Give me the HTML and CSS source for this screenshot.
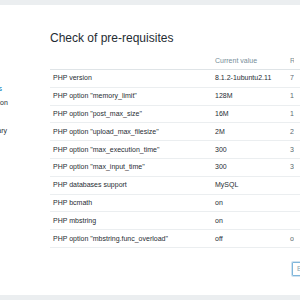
FILE: index.html
```html
<!doctype html>
<html lang="en">
    <head>
        <meta charset="UTF-8">
        <title>Zabbix setup - Check of pre-requisites</title>
        <link rel="stylesheet" href="styles.css">
    </head>
    <body>
        <div class="top-strip"></div>
        <div class="setup">
            <div class="setup-left">
                <ul class="steps">
                    <li>Welcome</li>
                    <li class="current">Check of pre-requisites</li>
                    <li>Configure DB connection</li>
                    <li>Settings</li>
                    <li>Pre-installation summary</li>
                    <li>Install</li>
                </ul>
            </div>
            <div class="setup-right">
                <h1>Check of pre-requisites</h1>
                <table class="checks">
                    <thead>
                        <tr>
                            <th class="col-name"></th>
                            <th class="col-current">Current value</th>
                            <th class="col-required">Required</th>
                            <th></th>
                        </tr>
                    </thead>
                    <tbody>
                        <tr><td>PHP version</td><td>8.1.2-1ubuntu2.11</td><td>7.4.0</td><td></td></tr>
                        <tr><td>PHP option "memory_limit"</td><td>128M</td><td>128M</td><td></td></tr>
                        <tr><td>PHP option "post_max_size"</td><td>16M</td><td>16M</td><td></td></tr>
                        <tr><td>PHP option "upload_max_filesize"</td><td>2M</td><td>2M</td><td></td></tr>
                        <tr><td>PHP option "max_execution_time"</td><td>300</td><td>300</td><td></td></tr>
                        <tr><td>PHP option "max_input_time"</td><td>300</td><td>300</td><td></td></tr>
                        <tr><td>PHP databases support</td><td>MySQL</td><td></td><td></td></tr>
                        <tr><td>PHP bcmath</td><td>on</td><td></td><td></td></tr>
                        <tr><td>PHP mbstring</td><td>on</td><td></td><td></td></tr>
                        <tr><td>PHP option "mbstring.func_overload"</td><td>off</td><td>off</td><td></td></tr>
                    </tbody>
                </table>
                <div class="actions">
                    <button class="btn-alt">Back</button>
                    <button class="btn">Next step</button>
                </div>
            </div>
        </div>
        <div class="bottom-strip"></div>
    </body>
</html>
```

FILE: styles.css
```css
* {
    box-sizing: border-box;
}
html, body {
    margin: 0;
    height: 300px;
    overflow: hidden;
}
body {
    display: flex;
    flex-direction: column;
    font-family: "Liberation Sans", Arial, sans-serif;
    color: #1f2c33;
    background-color: #fff;
}
.top-strip, .bottom-strip {
    height: 5px;
    flex: none;
    background-color: #ebeef0;
}
.setup {
    flex: 1;
    display: flex;
    min-height: 0;
}
.setup-left {
    width: 50px;
    flex: none;
}
.steps {
    list-style: none;
    margin: 63px 0 0 -70px;
    padding: 0;
    font-size: 7px;
    line-height: 14px;
    white-space: nowrap;
}
.steps .current {
    color: #0275b8;
}
.setup-right {
    flex: none;
    width: 340px;
}
h1 {
    margin: 26px 0 0;
    font-size: 12px;
    line-height: 14px;
    font-weight: normal;
}
.checks {
    width: 330px;
    margin-top: 12px;
    border-collapse: collapse;
    table-layout: fixed;
    font-size: 7px;
    line-height: 8px;
    text-align: left;
}
.checks th {
    padding: 0 3px 4px;
    font-weight: normal;
    color: #768d99;
    border-bottom: 1px solid #dfe4e7;
    overflow: hidden;
    white-space: nowrap;
}
.checks td {
    height: 17.8px;
    padding: 0 3px;
    border-bottom: 1px solid #ebeef0;
    vertical-align: middle;
    overflow: hidden;
    white-space: nowrap;
}
.col-name {
    width: 162px;
}
.col-current {
    width: 75px;
}
.col-required {
    width: 7px;
}
.checks td:nth-child(3) {
    padding-right: 0;
    color: #5a6a72;
}
.actions {
    display: flex;
    gap: 4px;
    margin: 14px 0 0 242px;
}
.actions button {
    height: 14px;
    padding: 0 4px;
    font-family: inherit;
    font-size: 7px;
    border-radius: 1px;
}
.btn-alt {
    background-color: #fff;
    color: #8aa4b3;
    border: 1px solid #7fb6db;
    box-shadow: 0 0 0 1px #cfe3f1;
}
.btn {
    background-color: #0275b8;
    color: #fff;
    border: 1px solid #0275b8;
}
```
